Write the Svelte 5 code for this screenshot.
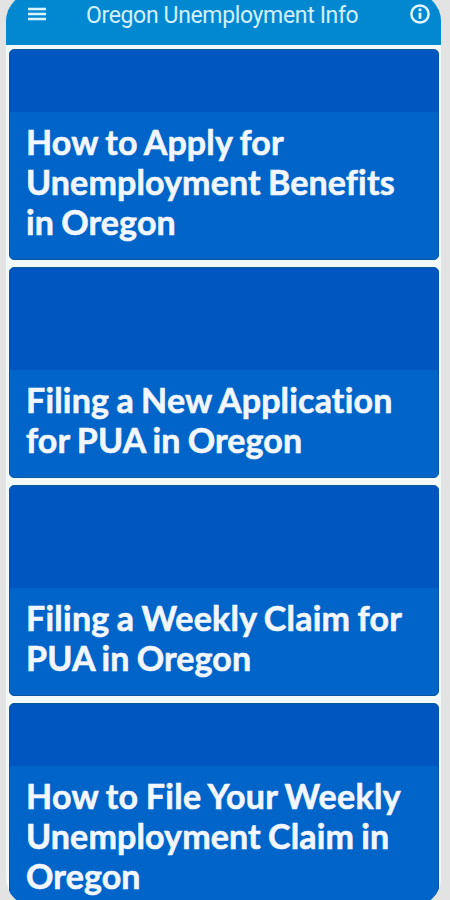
<script lang="ts">
  const title = 'Oregon Unemployment Info';

  // tracking: letter spacing of the line in px
  const topics = [
    [
      { text: 'How to Apply for', tracking: 0.16 },
      { text: 'Unemployment Benefits', tracking: 0.12 },
      { text: 'in Oregon', tracking: 0.12 }
    ],
    [
      { text: 'Filing a New Application', tracking: 0.18 },
      { text: 'for PUA in Oregon', tracking: 0.12 }
    ],
    [
      { text: 'Filing a Weekly Claim for', tracking: 0.24 },
      { text: 'PUA in Oregon', tracking: 0.1 }
    ],
    [
      { text: 'How to File Your Weekly', tracking: 0.3 },
      { text: 'Unemployment Claim in', tracking: 0.13 },
      { text: 'Oregon', tracking: 0.13 }
    ]
  ];
</script>

<div class="page">
  <div class="screen">
    <header>
      <button class="menu" aria-label="Menu">
        <svg width="20" height="14" viewBox="0 0 20 14">
          <path d="M1 2h18M1 7h18M1 12h18" stroke="#d9f3ff" stroke-width="2.6" />
        </svg>
      </button>
      <h1>{title}</h1>
      <button class="info" aria-label="Info">
        <svg width="20" height="20" viewBox="0 0 20 20">
          <circle cx="10" cy="10" r="8.6" fill="none" stroke="#e2f6ff" stroke-width="2.5" />
          <path d="M10 4.6v2.6M10 8.8v6" stroke="#e2f6ff" stroke-width="2.8" />
        </svg>
      </button>
    </header>

    <main>
      {#each topics as lines}
        <article>
          <h2>
            {#each lines as line}
              <span style="letter-spacing: {line.tracking}px">{line.text}</span>
            {/each}
          </h2>
        </article>
      {/each}
    </main>
  </div>
</div>

<style>
  :global(body) {
    background: #e3e3e3;
  }

  .page {
    height: 900px;
    overflow: hidden;
    display: flex;
    background: #e3e3e3;
  }

  .screen {
    width: 435px;
    height: 913px;
    margin: -7px 0 0 6px;
    flex-shrink: 0;
    border-radius: 28px;
    overflow: hidden;
    background: #f3f9f8;
  }

  header {
    height: 52px;
    box-sizing: border-box;
    padding: 7px 11px 0 21px;
    display: flex;
    align-items: flex-start;
    background: #0288d1;
  }

  button {
    display: block;
    padding: 0;
    border: none;
    background: none;
  }

  svg {
    display: block;
  }

  .menu {
    margin-top: 7px;
  }

  .info {
    margin-top: 4px;
  }

  h1 {
    flex: 1;
    margin: 1px 0 0 39px;
    font: 400 23px/30px Roboto, sans-serif;
    letter-spacing: -0.35px;
    color: #d3f0ff;
    white-space: nowrap;
  }

  main {
    display: flex;
    flex-direction: column;
    gap: 7px;
    padding: 4px 2px 0 3px;
  }

  article {
    height: 211px;
    flex-shrink: 0;
    box-sizing: border-box;
    display: flex;
    flex-direction: column;
    justify-content: flex-end;
    border: 1px solid #07599b;
    border-radius: 5px;
    overflow: hidden;
    background: #0056c1;
  }

  h2 {
    margin: 0;
    padding: 10px 16px 17px;
    background: #0064c8;
    font: 700 34px/40px Lato, sans-serif;
    font-variant-ligatures: none;
    word-spacing: -1.2px;
    -webkit-text-stroke: 0.6px #f1f6ff;
    color: #f1f6ff;
  }

  h2 span {
    display: block;
    white-space: nowrap;
  }
</style>
